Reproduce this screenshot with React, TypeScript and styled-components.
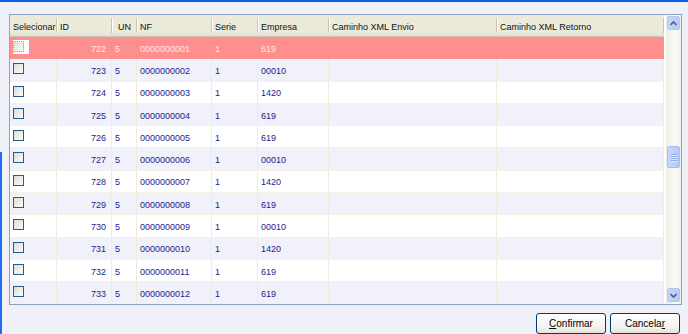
import React from 'react';
import styled, { createGlobalStyle } from 'styled-components';

const GlobalStyle = createGlobalStyle`
  html, body {
    margin: 0;
    padding: 0;
    background: #f0f1f8;
  }
  body {
    font-family: "Liberation Sans", Arial, sans-serif;
    font-size: 9px;
  }
`;

type Col = { key: string; title: string; width: number; align?: 'left' | 'right' | 'center'; headAlign?: 'left' | 'center' };

const columns: Col[] = [
  { key: 'sel', title: 'Selecionar', width: 47 },
  { key: 'id', title: 'ID', width: 55, align: 'right' },
  { key: 'un', title: 'UN', width: 25, headAlign: 'center' },
  { key: 'nf', title: 'NF', width: 75 },
  { key: 'serie', title: 'Serie', width: 46 },
  { key: 'empresa', title: 'Empresa', width: 71 },
  { key: 'envio', title: 'Caminho XML Envio', width: 168 },
  { key: 'retorno', title: 'Caminho XML Retorno', width: 167 },
];

const empresas = ['619', '00010', '1420', '619', '619', '00010', '1420', '619', '00010', '1420', '619', '619'];

const rows = empresas.map((empresa, i) => ({
  id: 722 + i,
  un: '5',
  nf: String(i + 1).padStart(10, '0'),
  serie: '1',
  empresa,
}));

const Window = styled.div`
  width: 688px;
  height: 334px;
  box-sizing: border-box;
  border-top: 2px solid #0b5ce6;
  background: #f0f1f8;
  display: flex;
  flex-direction: column;
  padding: 12px 6px 0 9px;
  overflow: hidden;
  position: relative;
  &::before {
    content: '';
    position: absolute;
    left: 0;
    top: 150px;
    bottom: 0;
    width: 2px;
    background: #1f6ef0;
  }
`;

const GridBox = styled.div`
  width: 673px;
  height: 291px;
  box-sizing: border-box;
  border: 1px solid #8ba3c4;
  background: #ffffff;
  display: flex;
`;

const TableArea = styled.div`
  flex: 1;
  display: flex;
  flex-direction: column;
  overflow: hidden;
`;

const HeaderRow = styled.div`
  display: flex;
  height: 22px;
  box-sizing: border-box;
  background: linear-gradient(#ebeadb, #ebeadb 80%, #e2decd);
  border-bottom: 1px solid #cbc7b8;
  flex-shrink: 0;
`;

const HeaderCell = styled.div<{ $w: number; $align?: string }>`
  width: ${p => p.$w}px;
  flex-shrink: 0;
  box-sizing: border-box;
  display: flex;
  align-items: center;
  justify-content: ${p => (p.$align === 'center' ? 'center' : 'flex-start')};
  padding: 2px 3px 0;
  color: #111;
  position: relative;
  white-space: nowrap;
  &::after {
    content: '';
    position: absolute;
    right: 0;
    top: 3px;
    bottom: 3px;
    width: 1px;
    background: #c7c5b2;
    box-shadow: 1px 0 0 #ffffff;
  }
`;

const Row = styled.div<{ $variant: 'sel' | 'alt' | 'plain' }>`
  display: flex;
  height: 22.3px;
  flex-shrink: 0;
  box-sizing: border-box;
  border-bottom: 1px solid ${p => (p.$variant === 'sel' ? '#ff8e8e' : '#f4f1e6')};
  background: ${p => (p.$variant === 'sel' ? '#ff8e8e' : p.$variant === 'alt' ? '#f0f1f9' : '#ffffff')};
  color: ${p => (p.$variant === 'sel' ? '#ffe8e8' : '#1c1c92')};
  &:first-of-type {
    margin-top: 1px;
  }
`;

const Cell = styled.div<{ $w: number; $align?: string; $sel?: boolean }>`
  width: ${p => p.$w}px;
  flex-shrink: 0;
  box-sizing: border-box;
  display: flex;
  align-items: center;
  justify-content: ${p => (p.$align === 'right' ? 'flex-end' : 'flex-start')};
  padding: ${p => (p.$align === 'right' ? '2px 5px 0 3px' : '2px 3px 0')};
  border-right: 1px solid ${p => (p.$sel ? '#ff8e8e' : '#efebdd')};
  white-space: nowrap;
`;

const CheckCell = styled.div<{ $w: number; $sel?: boolean }>`
  width: ${p => p.$w}px;
  flex-shrink: 0;
  box-sizing: border-box;
  padding: 3px 0 0 3px;
  border-right: 1px solid ${p => (p.$sel ? '#ff8e8e' : '#efebdd')};
`;

const CheckBox = styled.span<{ $focus?: boolean }>`
  display: block;
  width: 11px;
  height: 11px;
  box-sizing: border-box;
  border: 1px solid ${p => (p.$focus ? '#9aa0a8' : '#2b5a87')};
  border-style: ${p => (p.$focus ? 'dotted' : 'solid')};
  background: linear-gradient(135deg, #dcdcd7, #fbfbf9);
  margin-top: 1px;
`;

const FocusWrap = styled.span`
  display: inline-block;
  background: #ffffff;
  padding: 0 5px 2px 0;
`;

const Scrollbar = styled.div`
  width: 15px;
  flex-shrink: 0;
  margin-left: 2px;
  display: flex;
  flex-direction: column;
  background: linear-gradient(90deg, #eeede5, #fbfaf6 60%, #f3f1ea);
  padding: 1px 1px 2px 1px;
  box-sizing: border-box;
`;

const ScrollBtn = styled.div`
  height: 14px;
  border-radius: 2px;
  border: 1px solid #b5c7f0;
  background: linear-gradient(90deg, #c6d5fc, #b7cbfb);
  display: flex;
  align-items: center;
  justify-content: center;
  box-sizing: border-box;
`;

const Track = styled.div`
  flex: 1;
  display: flex;
  flex-direction: column;
  padding-top: 116px;
`;

const Thumb = styled.div`
  height: 22px;
  border-radius: 2px;
  border: 1px solid #a8bdf2;
  background: linear-gradient(90deg, #c8d7fd, #b2c8fb);
  display: flex;
  flex-direction: column;
  align-items: center;
  justify-content: center;
  gap: 1px;
  box-sizing: border-box;
`;

const Grip = styled.span`
  display: block;
  width: 6px;
  height: 1px;
  background: #8fa8e8;
  box-shadow: 0 1px 0 #e4ebfe;
`;

const Footer = styled.div`
  display: flex;
  justify-content: flex-end;
  gap: 4px;
  padding: 8px 2px 0 0;
`;

const Button = styled.button`
  width: 70px;
  height: 21px;
  box-sizing: border-box;
  border: 1px solid #003c74;
  border-radius: 3px;
  background: linear-gradient(#ffffff, #f3f2ee 70%, #e3e1d9);
  font-family: "Liberation Sans", Arial, sans-serif;
  font-size: 10px;
  color: #000;
  padding: 0;
  u {
    text-decoration: underline;
  }
`;

const Arrow = ({ up }: { up?: boolean }) => (
  <svg width="7" height="5" viewBox="0 0 7 5">
    <path d={up ? 'M0.5 4 L3.5 1 L6.5 4' : 'M0.5 1 L3.5 4 L6.5 1'} fill="none" stroke="#4d6185" strokeWidth="1.6" />
  </svg>
);

export default function App() {
  return (
    <>
      <GlobalStyle />
      <Window>
        <GridBox>
          <TableArea>
            <HeaderRow>
              {columns.map(c => (
                <HeaderCell key={c.key} $w={c.width} $align={c.headAlign}>
                  {c.title}
                </HeaderCell>
              ))}
            </HeaderRow>
            {rows.map((r, i) => {
              const variant = i === 0 ? 'sel' : i % 2 === 1 ? 'alt' : 'plain';
              const sel = i === 0;
              return (
                <Row key={r.id} $variant={variant}>
                  <CheckCell $w={columns[0].width} $sel={sel}>
                    {sel ? (
                      <FocusWrap>
                        <CheckBox $focus />
                      </FocusWrap>
                    ) : (
                      <CheckBox />
                    )}
                  </CheckCell>
                  <Cell $w={columns[1].width} $align="right" $sel={sel}>{r.id}</Cell>
                  <Cell $w={columns[2].width} $sel={sel}>{r.un}</Cell>
                  <Cell $w={columns[3].width} $sel={sel}>{r.nf}</Cell>
                  <Cell $w={columns[4].width} $sel={sel}>{r.serie}</Cell>
                  <Cell $w={columns[5].width} $sel={sel}>{r.empresa}</Cell>
                  <Cell $w={columns[6].width} $sel={sel}></Cell>
                  <Cell $w={columns[7].width} $sel={sel}></Cell>
                </Row>
              );
            })}
          </TableArea>
          <Scrollbar>
            <ScrollBtn>
              <Arrow up />
            </ScrollBtn>
            <Track>
              <Thumb>
                <Grip />
                <Grip />
                <Grip />
                <Grip />
              </Thumb>
            </Track>
            <ScrollBtn>
              <Arrow />
            </ScrollBtn>
          </Scrollbar>
        </GridBox>
        <Footer>
          <Button>
            <u>C</u>onfirmar
          </Button>
          <Button>
            Cancela<u>r</u>
          </Button>
        </Footer>
      </Window>
    </>
  );
}
